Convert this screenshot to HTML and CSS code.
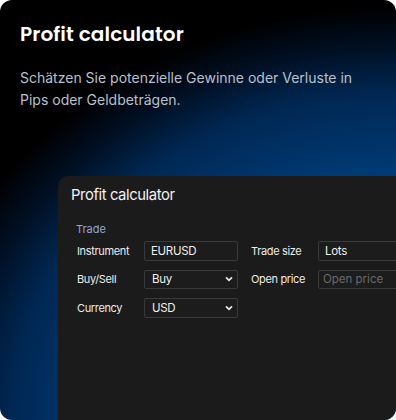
FILE: index.html
```html
<!DOCTYPE html>
<html lang="de">
<head>
<meta charset="utf-8">
<link rel="stylesheet" href="styles.css">
</head>
<body>
<div class="card">
  <h1 class="heading">Profit calculator</h1>
  <p class="lead">Schätzen Sie potenzielle Gewinne oder Verluste in Pips oder Geldbeträgen.</p>
  <div class="panel">
    <div class="panel-title">Profit calculator</div>
    <div class="section">Trade</div>
    <div class="form">
      <span class="label">Instrument</span>
      <span class="field">EURUSD</span>
      <span class="label">Trade size</span>
      <span class="field">Lots</span>

      <span class="label">Buy/Sell</span>
      <span class="field select">Buy<svg class="chev" viewBox="0 0 8 6" width="8" height="6"><path d="M1 1.3 L4 4.3 L7 1.3" fill="none" stroke="#e6e6e6" stroke-width="1.8"/></svg></span>
      <span class="label">Open price</span>
      <span class="field placeholder">Open price</span>

      <span class="label">Currency</span>
      <span class="field select">USD<svg class="chev" viewBox="0 0 8 6" width="8" height="6"><path d="M1 1.3 L4 4.3 L7 1.3" fill="none" stroke="#e6e6e6" stroke-width="1.8"/></svg></span>
    </div>
  </div>
</div>
</body>
</html>
```

FILE: styles.css
```css
* { box-sizing: border-box; }
html, body { margin: 0; padding: 0; background: #fff; }
.card {
  width: 396px;
  height: 420px;
  border-radius: 12px;
  overflow: hidden;
  display: flex;
  flex-direction: column;
  padding: 20px 0 0 20px;
  background: radial-gradient(ellipse 460px 390px at 100% 100%, #00468a 0%, #003a74 64%, #002752 84%, #000f22 96%, #000 106%);
  background-color: #000;
}
.heading {
  margin: 0;
  font-family: "Poppins", "Inter", sans-serif;
  font-weight: 600;
  font-size: 20px;
  line-height: 28px;
  color: #fff;
  letter-spacing: 0.1px;
}
.lead {
  margin: 19px 0 0 0;
  max-width: 352px;
  font-family: "Inter", sans-serif;
  font-size: 14px;
  line-height: 21.5px;
  color: #b9c0cc;
}
.panel {
  flex: 1;
  margin-top: 66px;
  margin-left: 38px;
  background: #1b1b1b;
  border-radius: 10px 0 0 0;
  padding: 10px 0 0 13px;
  font-family: "Inter", sans-serif;
}
.panel-title {
  font-size: 14.8px;
  line-height: 19px;
  color: #f2f2f2;
  letter-spacing: -0.4px;
}
.section {
  margin: 17px 0 0 5px;
  font-size: 11px;
  line-height: 14px;
  color: #8fa6dc;
}
.form {
  margin: 5px 0 0 6px;
  display: grid;
  grid-template-columns: 67px 107px 67px 94px;
  row-gap: 9px;
  align-items: center;
}
.form .field:nth-child(4n+2) { margin-right: 13px; }
.label {
  font-size: 11px;
  color: #ececec;
  letter-spacing: -0.35px;
  white-space: nowrap;
}
.field {
  height: 19.5px;
  border: 1px solid #3a3a3a;
  border-radius: 2px;
  background: #1c1c1c;
  font-size: 11.5px;
  letter-spacing: -0.3px;
  color: #f0f0f0;
  padding: 0 4px 0 6px;
  display: flex;
  align-items: center;
  justify-content: space-between;
  white-space: nowrap;
}
.placeholder { color: #6a6a6a; font-size: 11.5px; letter-spacing: 0; padding-left: 4px; }
.select { padding-left: 7px; }
```
